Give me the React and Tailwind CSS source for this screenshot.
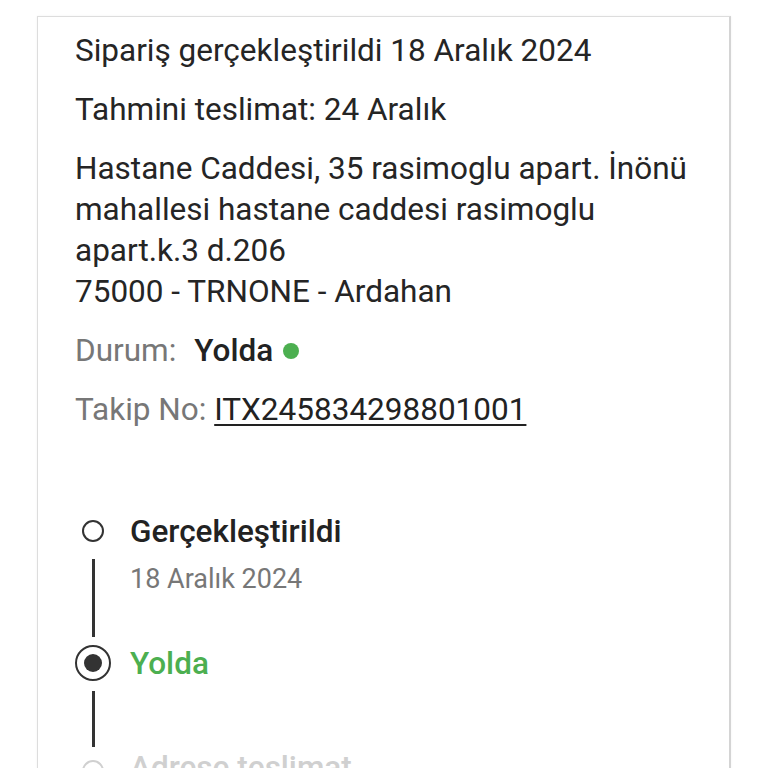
import React from 'react';

const steps = [
  { title: 'Gerçekleştirildi', date: '18 Aralık 2024', state: 'done' },
  { title: 'Yolda', state: 'current' },
  { title: 'Adrese teslimat', state: 'pending' },
];

const StepMarker = ({ state }) => {
  if (state === 'current') {
    return (
      <div className="mt-[2px] flex h-[36px] w-[36px] items-center justify-center rounded-full border-2 border-[#333]">
        <div className="h-[18px] w-[18px] rounded-full bg-[#333]" />
      </div>
    );
  }
  return (
    <div
      className={
        state === 'pending'
          ? 'mt-[13px] h-[22px] w-[22px] rounded-full border-2 border-[#d0d0d0]'
          : 'mt-[9px] h-[22px] w-[22px] rounded-full border-2 border-[#333]'
      }
    />
  );
};

export default function App() {
  return (
    <div className="h-[768px] overflow-hidden bg-white font-['Roboto',sans-serif]">
      <div className="mx-[37px] mt-[16px] border border-[#ddd] border-r-2 border-r-[#d4d4d4] bg-white pl-[37px] pr-6 pt-[13px] shadow-[0_0_2px_rgba(0,0,0,0.06)]">
        {/* Order summary */}
        <div className="flex flex-col gap-[18px] text-[31.5px] leading-[41px] text-[#252525]">
          <p>Sipariş gerçekleştirildi 18 Aralık 2024</p>
          <p>Tahmini teslimat: 24 Aralık</p>
          <p>
            Hastane Caddesi, 35 rasimoglu apart. İnönü mahallesi hastane caddesi rasimoglu apart.k.3 d.206
            <br />
            75000 - TRNONE - Ardahan
          </p>
          <p className="flex items-center">
            <span className="text-[#777]">Durum:</span>
            <span className="ml-[18px] font-medium text-[#222]">Yolda</span>
            <span className="ml-[10px] h-[16px] w-[16px] rounded-full bg-[#4caf50]" />
          </p>
          <p>
            <span className="text-[#777]">Takip No: </span>
            <span className="text-[#222] underline decoration-2 underline-offset-[4px]">ITX245834298801001</span>
          </p>
        </div>

        {/* Tracking timeline */}
        <div className="mt-[81px] -ml-[38px] pl-[38px]">
          {steps.map((step, i) => (
            <div key={step.title} className="flex">
              <div className="flex w-[36px] flex-col items-center">
                <StepMarker state={step.state} />
                {i < steps.length - 1 && (
                  <div
                    className={
                      i === 0
                        ? 'mt-[17px] mb-[6px] w-[3px] flex-1 bg-[#333]'
                        : 'mt-[10px] mb-0 w-[3px] flex-1 bg-[#333]'
                    }
                  />
                )}
              </div>
              <div
                className={
                  i === 0 ? 'ml-[19px] pb-[47px]' : i === 1 ? 'ml-[19px] pb-[63px]' : 'ml-[19px] pb-6'
                }
              >
                <p
                  className={
                    step.state === 'current'
                      ? 'text-[31.5px] font-medium leading-[41px] text-[#4caf50]'
                      : step.state === 'pending'
                        ? 'text-[31.5px] font-medium leading-[41px] text-[#d0d0d0]'
                        : 'text-[31.5px] font-medium leading-[41px] text-[#222]'
                  }
                >
                  {step.title}
                </p>
                {step.date && <p className="mt-[10px] text-[27px] leading-[34px] text-[#777]">{step.date}</p>}
              </div>
            </div>
          ))}
        </div>
      </div>
    </div>
  );
}
